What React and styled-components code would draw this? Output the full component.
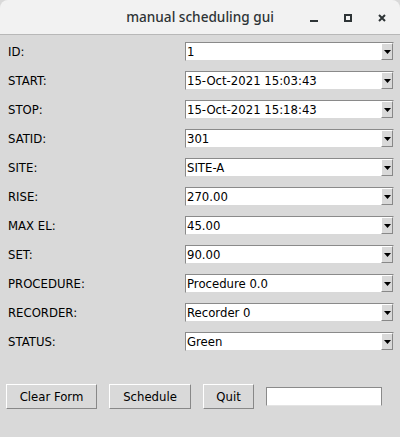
import styled, { createGlobalStyle } from 'styled-components';

const GlobalStyle = createGlobalStyle`
  html, body {
    margin: 0;
    padding: 0;
    background: #d9d9d9;
  }
  * {
    box-sizing: border-box;
  }
`;

const Window = styled.div`
  width: 400px;
  height: 437px;
  background: #d9d9d9;
  font-family: "DejaVu Sans", sans-serif;
  font-size: 11.7px;
  color: #000;
  overflow: hidden;
`;

const TitleBar = styled.div`
  position: relative;
  height: 35px;
  background: #f2f2f2;
  border-bottom: 1px solid #b8b8b8;
  border-radius: 8px 8px 0 0;
  display: flex;
  align-items: center;
  justify-content: center;
`;

const Title = styled.div`
  font-family: "Noto Sans", "DejaVu Sans", sans-serif;
  font-size: 13.6px;
  font-weight: 500;
  color: #2e3436;
  margin-top: -1px;
`;

const Controls = styled.div`
  position: absolute;
  right: 14px;
  top: 13px;
  display: flex;
  gap: 26px;
  align-items: flex-end;
`;

const Form = styled.div`
  display: grid;
  grid-template-columns: 177px 209px;
  row-gap: 10px;
  padding: 7px 6px 0 8px;
`;

const Label = styled.div`
  height: 19px;
  line-height: 19px;
  padding-top: 1px;
`;

const Combo = styled.div`
  height: 19px;
  background: #fff;
  border: 1px solid;
  border-color: #8a8a8a #d9d9d9 #d9d9d9 #8a8a8a;
  display: flex;
  align-items: stretch;
`;

const ComboText = styled.div`
  flex: 1;
  padding-left: 1px;
  line-height: 18px;
  white-space: nowrap;
  overflow: hidden;
`;

const ArrowButton = styled.div`
  width: 12px;
  background: #d9d9d9;
  border: 1px solid;
  border-color: #ffffff #888888 #888888 #ffffff;
  display: flex;
  align-items: center;
  justify-content: center;
  padding-top: 3px;
`;

const ButtonRow = styled.div`
  display: flex;
  align-items: center;
  gap: 12px;
  padding: 0 0 0 6px;
  margin-top: 33px;
`;

const Button = styled.button`
  width: ${p => p.$w}px;
  height: 25px;
  padding: 0;
  background: #d9d9d9;
  border: 1px solid;
  border-color: #ffffff #888888 #888888 #ffffff;
  font-family: "DejaVu Sans", sans-serif;
  font-size: 11.7px;
  color: #000;
  margin: 0;
`;

const Entry = styled.div`
  width: 116px;
  height: 19px;
  background: #fff;
  border: 1px solid;
  border-color: #8a8a8a #8a8a8a #e4e4e4 #8a8a8a;
`;

const fields = [
  ['ID:', '1'],
  ['START:', '15-Oct-2021 15:03:43'],
  ['STOP:', '15-Oct-2021 15:18:43'],
  ['SATID:', '301'],
  ['SITE:', 'SITE-A'],
  ['RISE:', '270.00'],
  ['MAX EL:', '45.00'],
  ['SET:', '90.00'],
  ['PROCEDURE:', 'Procedure 0.0'],
  ['RECORDER:', 'Recorder 0'],
  ['STATUS:', 'Green'],
];

export default function App() {
  return (
    <Window>
      <GlobalStyle />
      <TitleBar>
        <Title>manual scheduling gui</Title>
        <Controls>
          <svg width="8" height="9" viewBox="0 0 8 9">
            <rect x="0" y="7" width="8" height="2" fill="#2e3436" />
          </svg>
          <svg width="8" height="8" viewBox="0 0 8 8">
            <rect x="1" y="1" width="6" height="6" fill="none" stroke="#2e3436" strokeWidth="2" />
          </svg>
          <svg width="8" height="8" viewBox="0 0 8 8">
            <path d="M1 1 L7 7 M7 1 L1 7" stroke="#2e3436" strokeWidth="2" />
          </svg>
        </Controls>
      </TitleBar>
      <Form>
        {fields.map(([label, value]) => (
          <>
            <Label key={label}>{label}</Label>
            <Combo key={label + 'v'}>
              <ComboText>{value}</ComboText>
              <ArrowButton>
                <svg width="7" height="6" viewBox="0 0 7 6">
                  <path d="M0 0 L7 0 L3.5 4 Z" fill="#000" />
                </svg>
              </ArrowButton>
            </Combo>
          </>
        ))}
      </Form>
      <ButtonRow>
        <Button $w={91}>Clear Form</Button>
        <Button $w={82}>Schedule</Button>
        <Button $w={51}>Quit</Button>
        <Entry />
      </ButtonRow>
    </Window>
  );
}
